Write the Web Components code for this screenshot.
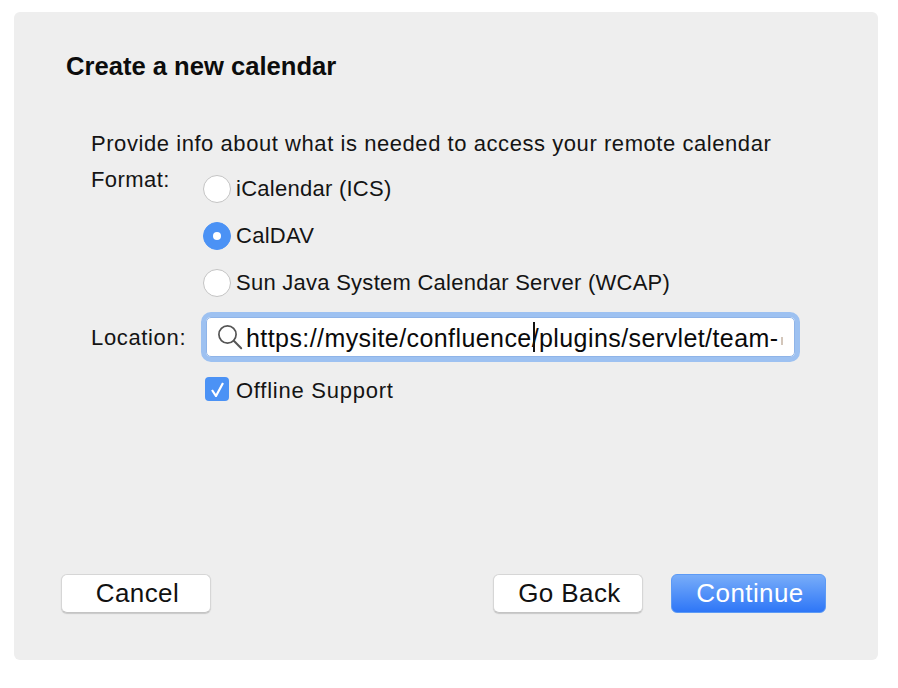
<!DOCTYPE html>
<html>
<head>
<meta charset="utf-8">
<title>Create a new calendar</title>
<style>
    html, body { margin: 0; background: #fff; }
    body { padding: 12px 20px 28px 14px; font-family: "Liberation Sans", Arial, sans-serif; color: #111; }
</style>
</head>
<body>
<cal-dialog heading="Create a new calendar">
    <cal-intro slot="form">Provide info about what is needed to access your remote calendar</cal-intro>
    <cal-form-row label="Format:" slot="form">
        <cal-radio>iCalendar (ICS)</cal-radio>
        <cal-radio checked>CalDAV</cal-radio>
        <cal-radio>Sun Java System Calendar Server (WCAP)</cal-radio>
    </cal-form-row>
    <cal-form-row label="Location:" slot="form" class="location">
        <cal-search value="https://mysite/confluence/plugins/servlet/team-"></cal-search>
        <cal-check checked>Offline Support</cal-check>
    </cal-form-row>
    <cal-button slot="left">Cancel</cal-button>
    <cal-button slot="right">Go Back</cal-button>
    <cal-button slot="right" primary>Continue</cal-button>
</cal-dialog>

<script>
const dialogTemplate = document.createElement('template');
dialogTemplate.innerHTML = `
    <style>
        :host {
            display: flex;
            flex-direction: column;
            box-sizing: border-box;
            width: 864px;
            height: 648px;
            padding: 41px 52px 47px 47px;
            background: #eeeeee;
            border-radius: 6px;
        }
        h1 {
            margin: 0 0 0 5px;
            font-size: 25.6px;
            line-height: 26px;
            font-weight: bold;
            color: #0c0c0c;
        }
        .form {
            display: flex;
            flex-direction: column;
            margin: 51px 0 0 30px;
        }
        .buttons {
            display: flex;
            justify-content: space-between;
            margin-top: auto;
        }
        .group {
            display: flex;
            gap: 28px;
        }
    </style>
    <h1></h1>
    <div class="form"><slot name="form"></slot></div>
    <div class="buttons">
        <div class="group"><slot name="left"></slot></div>
        <div class="group"><slot name="right"></slot></div>
    </div>`;

class CalDialog extends HTMLElement {
    constructor() {
        super();
        this.attachShadow({mode: 'open'});
        this.shadowRoot.appendChild(dialogTemplate.content.cloneNode(true));
    }
    connectedCallback() {
        this.shadowRoot.querySelector('h1').textContent = this.getAttribute('heading');
    }
}

const introTemplate = document.createElement('template');
introTemplate.innerHTML = `
    <style>
        :host {
            display: block;
            box-sizing: border-box;
            height: 38px;
            padding-top: 1px;
            font-size: 22px;
            line-height: 26px;
            letter-spacing: 0.56px;
            white-space: nowrap;
            color: #141414;
        }
    </style>
    <slot></slot>`;

class CalIntro extends HTMLElement {
    constructor() {
        super();
        this.attachShadow({mode: 'open'});
        this.shadowRoot.appendChild(introTemplate.content.cloneNode(true));
    }
}

const rowTemplate = document.createElement('template');
rowTemplate.innerHTML = `
    <style>
        :host {
            display: grid;
            grid-template-columns: 112px 1fr;
            font-size: 22px;
            line-height: 26px;
            color: #141414;
        }
        :host(.location) { margin-top: 6px; }
        :host(.location) .label { margin-top: 0; padding-top: 13px; letter-spacing: 0.65px; }
        .label { margin-top: -1px; letter-spacing: 0.42px; }
        .controls { display: flex; flex-direction: column; }
    </style>
    <div class="label"></div>
    <div class="controls"><slot></slot></div>`;

class CalFormRow extends HTMLElement {
    constructor() {
        super();
        this.attachShadow({mode: 'open'});
        this.shadowRoot.appendChild(rowTemplate.content.cloneNode(true));
    }
    connectedCallback() {
        this.shadowRoot.querySelector('.label').textContent = this.getAttribute('label');
    }
}

const radioTemplate = document.createElement('template');
radioTemplate.innerHTML = `
    <style>
        :host {
            display: flex;
            align-items: center;
            gap: 5px;
            height: 47px;
            letter-spacing: 0.26px;
        }
        :host(:first-child) { margin-top: -3px; }
        .dot {
            box-sizing: border-box;
            width: 28px;
            height: 28px;
            border-radius: 50%;
            background: #fff;
            border: 1.5px solid #c4c4c4;
            display: flex;
            align-items: center;
            justify-content: center;
        }
        :host([checked]) .dot {
            background: #4b92f5;
            border-color: #4b92f5;
        }
        :host([checked]) .dot::after {
            content: '';
            width: 8px;
            height: 8px;
            border-radius: 50%;
            background: #fff;
        }
    </style>
    <span class="dot"></span><slot></slot>`;

class CalRadio extends HTMLElement {
    constructor() {
        super();
        this.attachShadow({mode: 'open'});
        this.shadowRoot.appendChild(radioTemplate.content.cloneNode(true));
    }
}

const searchTemplate = document.createElement('template');
searchTemplate.innerHTML = `
    <style>
        :host {
            display: block;
            box-sizing: border-box;
            width: 599px;
            height: 50px;
            margin-left: -2px;
            border: 5px solid #9dc1f1;
            border-radius: 10px;
            background: #fff;
        }
        .inner {
            display: flex;
            align-items: center;
            height: 100%;
            padding-left: 10px;
            overflow: hidden;
            border: 1px solid #8fb4e8;
            border-radius: 5px;
            box-sizing: border-box;
        }
        svg { flex: none; width: 26px; height: 26px; margin-right: 3px; }
        .text {
            position: relative;
            display: flex;
            align-items: center;
            margin-top: 2px;
            white-space: nowrap;
            font-size: 25px;
            line-height: 34px;
            letter-spacing: 0.42px;
            color: #0a0a0a;
        }
        .sliver {
            width: 2px;
            height: 8px;
            margin: 5px 0 0 3px;
            background: #d3c6ba;
        }
        .caret {
            position: absolute;
            left: 287px;
            top: 1px;
            width: 2px;
            height: 30px;
            background: #111;
        }
    </style>
    <div class="inner">
        <svg viewBox="0 0 26 26" fill="none" stroke="#555" stroke-width="1.7">
            <circle cx="10.5" cy="10.5" r="8.6"/>
            <path d="M16.8 16.8l7.4 7.4" stroke-linecap="round" stroke-width="2"/>
        </svg>
        <div class="text"><span class="val"></span><i class="sliver"></i><i class="caret"></i></div>
    </div>`;

class CalSearch extends HTMLElement {
    constructor() {
        super();
        this.attachShadow({mode: 'open'});
        this.shadowRoot.appendChild(searchTemplate.content.cloneNode(true));
    }
    connectedCallback() {
        this.shadowRoot.querySelector('.val').textContent = this.getAttribute('value');
    }
}

const checkTemplate = document.createElement('template');
checkTemplate.innerHTML = `
    <style>
        :host {
            display: flex;
            align-items: center;
            gap: 7px;
            height: 30px;
            margin-top: 12px;
            letter-spacing: 0.75px;
        }
        .box {
            box-sizing: border-box;
            width: 24px;
            height: 24px;
            margin-left: 2px;
            border-radius: 4px;
            background: #4b92f5;
            display: flex;
            align-items: center;
            justify-content: center;
        }
        svg { width: 16px; height: 16px; }
        .caption { padding-top: 3px; }
    </style>
    <span class="box">
        <svg viewBox="0 0 16 16" fill="none" stroke="#fff" stroke-width="2.2">
            <path d="M3 9l4 6L14 2"/>
        </svg>
    </span><span class="caption"><slot></slot></span>`;

class CalCheck extends HTMLElement {
    constructor() {
        super();
        this.attachShadow({mode: 'open'});
        this.shadowRoot.appendChild(checkTemplate.content.cloneNode(true));
    }
}

const buttonTemplate = document.createElement('template');
buttonTemplate.innerHTML = `
    <style>
        :host {
            display: flex;
            align-items: center;
            justify-content: center;
            box-sizing: border-box;
            width: 150px;
            height: 39px;
            padding-left: 3px;
            border: 1px solid #d6d6d6;
            border-bottom-color: #c4c4c4;
            border-radius: 6px;
            background: #fff;
            color: #111;
            font-size: 26px;
            letter-spacing: 0.4px;
            box-shadow: 0 1px 1px #c8c8c8;
        }
        :host([primary]) {
            width: 155px;
            color: #fff;
            border-color: #5c9af5;
            background: linear-gradient(#78adf9, #2e76f7);
            box-shadow: none;
        }
    </style>
    <slot></slot>`;

class CalButton extends HTMLElement {
    constructor() {
        super();
        this.attachShadow({mode: 'open'});
        this.shadowRoot.appendChild(buttonTemplate.content.cloneNode(true));
    }
}

window.customElements.define('cal-dialog', CalDialog);
window.customElements.define('cal-intro', CalIntro);
window.customElements.define('cal-form-row', CalFormRow);
window.customElements.define('cal-radio', CalRadio);
window.customElements.define('cal-search', CalSearch);
window.customElements.define('cal-check', CalCheck);
window.customElements.define('cal-button', CalButton);
</script>
</body>
</html>
